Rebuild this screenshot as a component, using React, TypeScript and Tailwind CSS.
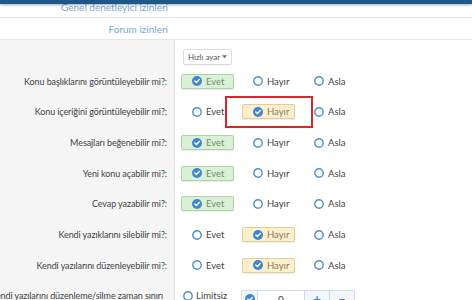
import React from "react";

type Sel = "Evet" | "Hayır" | "Asla" | null;

const Radio = ({ checked }: { checked: boolean }) =>
  checked ? (
    <svg width="10" height="10" viewBox="0 0 10 10" className="shrink-0">
      <circle cx="5" cy="5" r="5" fill="#3f87d4" />
      <path d="M2.8 5.1 L4.4 6.6 L7.3 3.6" stroke="#fff" strokeWidth="1.4" fill="none" strokeLinecap="round" strokeLinejoin="round" />
    </svg>
  ) : (
    <svg width="10" height="10" viewBox="0 0 10 10" className="shrink-0">
      <circle cx="5" cy="5" r="4.2" fill="#fff" stroke="#4a8fd2" strokeWidth="1.4" />
    </svg>
  );

const Option = ({ label, sel }: { label: string; sel: Sel }) => {
  const checked = sel === label;
  const cls =
    checked && label === "Evet"
      ? "bg-[#dcf0d8] border-[#a9d6a3] text-[#6f8f6c] shadow-[0_1px_1px_rgba(0,0,0,0.08)]"
      : checked
      ? "bg-[#fcefcd] border-[#e6cf97] text-[#8a7b5a] shadow-[0_1px_1px_rgba(0,0,0,0.08)]"
      : "border-transparent text-[#444]";
  return (
    <div className={`w-[53px] h-[15px] border rounded-[2px] flex items-center pl-[10px] gap-[3px] ${cls}`}>
      <Radio checked={checked} />
      <span className="text-[9.5px] leading-none ml-[1px]">{label}</span>
    </div>
  );
};

const rows: { label: string; sel: Sel }[] = [
  { label: "Konu başlıklarını görüntüleyebilir mi?:", sel: "Evet" },
  { label: "Konu içeriğini görüntüleyebilir mi?:", sel: "Hayır" },
  { label: "Mesajları beğenebilir mi?:", sel: "Evet" },
  { label: "Yeni konu açabilir mi?:", sel: "Evet" },
  { label: "Cevap yazabilir mi?:", sel: "Evet" },
  { label: "Kendi yazıklarını silebilir mi?:", sel: "Hayır" },
  { label: "Kendi yazılarını düzenleyebilir mi?:", sel: "Hayır" },
];

export default function App() {
  return (
    <div
      className="relative w-[472px] h-[300px] overflow-hidden bg-white"
      style={{ fontFamily: '"Segoe UI", Lato, "Noto Sans", sans-serif' }}
    >
      <div className="absolute top-0 left-0 right-0 h-[4px] bg-[#1d5887] shadow-[0_1px_3px_rgba(0,0,0,0.35)] z-10" />
      <div className="h-[18px] border-b border-[#e6e6e6] flex justify-end items-center pr-[304px]">
        <span className="text-[10px] leading-none text-[#79a8d8] whitespace-nowrap mt-[-3px]">Genel denetleyici izinleri</span>
      </div>
      <div className="h-[22px] border-b border-[#e6e6e6] flex justify-end items-center pr-[304px]">
        <span className="text-[10px] leading-none text-[#79a8d8] whitespace-nowrap">Forum izinleri</span>
      </div>
      <div className="flex h-[260px]">
        <div className="w-[175px] shrink-0 bg-[#f5f5f5] border-r border-[#e3e3e3] flex flex-col pt-[26px]">
          {rows.map((r) => (
            <div key={r.label} className="h-[30.67px] shrink-0 flex items-center justify-end pr-[7px]">
              <span className="text-[9px] tracking-[-0.1px] text-[#444] whitespace-nowrap">{r.label}</span>
            </div>
          ))}
          <div className="h-[30.67px] shrink-0 flex items-center justify-end pr-[11px]">
            <span className="text-[9px] tracking-[-0.1px] text-[#444] whitespace-nowrap">Kendi yazılarını düzenleme/silme zaman sınırı</span>
          </div>
        </div>
        <div className="flex-1 flex flex-col pl-[6px]">
          <div className="h-[26px] shrink-0 flex items-start pt-[9px] pl-[2px]">
            <div className="h-[16px] px-[4px] border border-[#dcdcdc] rounded-[2px] bg-white flex items-center gap-[2px] text-[8px] text-[#555] leading-none shadow-[0_1px_1px_rgba(0,0,0,0.05)]">
              Hızlı ayar
              <svg width="5" height="4" viewBox="0 0 6 4"><path d="M0 0 L6 0 L3 3.5 Z" fill="#4a6f96" /></svg>
            </div>
          </div>
          {rows.map((r) => (
            <div key={r.label} className="h-[30.67px] shrink-0 flex items-center gap-[8px]">
              <Option label="Evet" sel={r.sel} />
              <Option label="Hayır" sel={r.sel} />
              <Option label="Asla" sel={r.sel} />
            </div>
          ))}
          <div className="h-[30.67px] shrink-0 flex items-center">
            <div className="flex items-center gap-[3px] pl-[2px] w-[60px] text-[#444]">
              <Radio checked={false} />
              <span className="text-[9.5px] leading-none">Limitsiz</span>
            </div>
            <div className="flex h-[18px] mt-[7px] border border-[#d3dde8] rounded-[2px] bg-[#f3f6fa] items-stretch">
              <div className="w-[16px] border-r border-[#d3dde8] flex items-center justify-center">
                <Radio checked={true} />
              </div>
              <div className="w-[46px] bg-white flex items-center justify-center text-[10px] text-[#444]">0</div>
              <div className="w-[25px] border-l border-[#d3dde8] flex items-center justify-center text-[#3f87d4] text-[13px] font-bold leading-none">+</div>
              <div className="w-[25px] border-l border-[#d3dde8] flex items-center justify-center text-[#3f87d4] text-[13px] font-bold leading-none">−</div>
            </div>
          </div>
        </div>
      </div>
      <div className="absolute left-[225px] top-[96px] w-[88px] h-[32px] border-2 border-[#d8262b]" />
    </div>
  );
}
